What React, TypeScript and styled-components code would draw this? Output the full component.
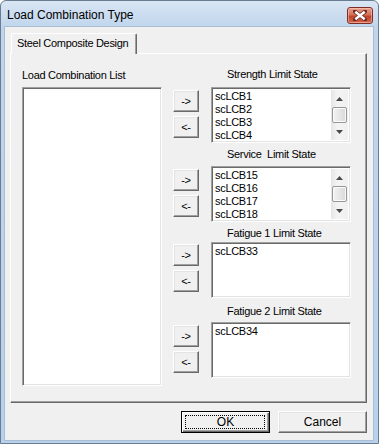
import React from 'react';
import styled, { createGlobalStyle } from 'styled-components';

const Global = createGlobalStyle`
  html, body { margin: 0; padding: 0; background: #ffffff; }
  body { width: 379px; height: 444px; overflow: hidden; }
  * { box-sizing: border-box; }
`;

const UI = `"Liberation Sans", Arial, sans-serif`;

const Window = styled.div`
  width: 379px;
  height: 444px;
  display: flex;
  flex-direction: column;
  background: linear-gradient(#d9e6f4 0px, #c0d5ec 26px, #b9d1ea 100%);
  border: 1px solid #6a7c93;
  border-radius: 6px 6px 0 0;
  padding: 0 4px 2px 3px;
  font-family: ${UI};
  font-size: 11px;
  letter-spacing: -0.3px;
  color: #000;
`;

const TitleBar = styled.div`
  height: 25px;
  flex: none;
  display: flex;
  align-items: center;
  justify-content: space-between;
  padding-left: 3px;
`;

const Title = styled.span`
  font-family: ${UI};
  font-size: 12px;
  letter-spacing: 0;
  color: #000;
  margin-top: 2px;
`;

const CloseBtn = styled.div`
  width: 26px;
  height: 17px;
  margin-right: 1px;
  margin-top: 4px;
  border: 1px solid #7e2f25;
  border-radius: 3px;
  background: linear-gradient(#e9a08c 0%, #d56f57 45%, #c0432a 55%, #d0664a 100%);
  box-shadow: inset 0 0 0 1px rgba(255, 215, 205, 0.5);
  display: flex;
  align-items: center;
  justify-content: center;
`;

const Client = styled.div`
  flex: 1;
  background: #f0f0f0;
  border: 1px solid #a9bdd3;
  display: flex;
  flex-direction: column;
  padding: 6px 6px 0 5px;
`;

const TabStrip = styled.div`
  display: flex;
  padding-left: 1px;
  height: 21px;
  position: relative;
  z-index: 1;
`;

const Tab = styled.div`
  height: 21px;
  width: 126px;
  background: #f0f0f0;
  border-top: 1px solid #ffffff;
  border-left: 1px solid #ffffff;
  border-right: 1px solid #696969;
  box-shadow: inset -1px 0 0 #a0a0a0;
  border-radius: 2px 2px 0 0;
  padding: 3px 0 0 5px;
  white-space: nowrap;
`;

const Panel = styled.div`
  height: 350px;
  margin-top: -1px;
  border-top: 1px solid #ffffff;
  border-left: 1px solid #ffffff;
  border-right: 1px solid #696969;
  border-bottom: 1px solid #696969;
  box-shadow: inset -1px -1px 0 #a0a0a0;
  display: flex;
  padding-left: 11px;
`;

const LeftColumn = styled.div`
  width: 140px;
  display: flex;
  flex-direction: column;
  gap: 5px;
  padding-top: 15px;
`;

const Label = styled.div`
  height: 13px;
  line-height: 13px;
  white-space: pre;
`;

const ListBox = styled.div<{ $h: number }>`
  height: ${(p) => p.$h}px;
  width: 140px;
  background: #ffffff;
  border-top: 1px solid #a0a0a0;
  border-left: 1px solid #a0a0a0;
  border-right: 1px solid #ffffff;
  border-bottom: 1px solid #ffffff;
  box-shadow: inset 1px 1px 0 #696969, inset -1px -1px 0 #e3e3e3;
  padding: 2px;
  display: flex;
`;

const Items = styled.div`
  flex: 1;
  padding: 0 0 0 1px;
  overflow: hidden;
`;

const Item = styled.div`
  height: 13px;
  line-height: 13px;
  white-space: nowrap;
`;

const ScrollBar = styled.div`
  width: 17px;
  display: flex;
  flex-direction: column;
  background: linear-gradient(90deg, #e6e6e6, #f4f4f4 40%, #f0f0f0);
`;

const ArrowCell = styled.div`
  height: 17px;
  display: flex;
  align-items: center;
  justify-content: center;
`;

const Track = styled.div`
  flex: 1;
  display: flex;
  padding: 0 1px;
`;

const Thumb = styled.div`
  flex: 1;
  border: 1px solid #979797;
  border-radius: 2px;
  background: linear-gradient(90deg, #f3f3f3, #e6e6e6 50%, #d9d9d9);
  box-shadow: inset 0 0 0 1px #fbfbfb;
`;

const RightArea = styled.div`
  display: flex;
  flex-direction: column;
  margin-left: 11px;
`;

const Group = styled.div<{ $mt: number }>`
  display: grid;
  grid-template-columns: 26px 140px;
  column-gap: 12px;
  margin-top: ${(p) => p.$mt}px;
`;

const GroupLabel = styled(Label)<{ $gap: number }>`
  grid-column: 2;
  margin-bottom: ${(p) => p.$gap}px;
  padding-left: 16px;
`;

const ButtonStack = styled.div<{ $top: number }>`
  grid-column: 1;
  display: flex;
  flex-direction: column;
  gap: 4px;
  padding-top: ${(p) => p.$top}px;
`;

const MoveButton = styled.div`
  width: 26px;
  height: 22px;
  background: #f0f0f0;
  border-top: 1px solid #ffffff;
  border-left: 1px solid #ffffff;
  border-right: 1px solid #696969;
  border-bottom: 1px solid #696969;
  box-shadow: inset -1px -1px 0 #a0a0a0, inset 1px 1px 0 #e3e3e3;
  display: flex;
  align-items: center;
  justify-content: center;
  padding-bottom: 1px;
  white-space: pre;
`;

const Footer = styled.div`
  display: flex;
  justify-content: flex-end;
  gap: 8px;
  padding-top: 8px;
`;

const DialogButton = styled.div<{ $default?: boolean }>`
  width: 89px;
  height: 22px;
  position: relative;
  background: #f0f0f0;
  border: 1px solid;
  border-color: ${(p) => (p.$default ? '#000000' : '#ffffff #696969 #696969 #ffffff')};
  box-shadow: ${(p) =>
    p.$default
      ? 'inset 1px 1px 0 #ffffff, inset -1px -1px 0 #696969, inset -2px -2px 0 #a0a0a0'
      : 'inset -1px -1px 0 #a0a0a0, inset 1px 1px 0 #e3e3e3'};
  display: flex;
  align-items: center;
  justify-content: center;
  font-size: 12px;
  letter-spacing: 0;
`;

const FocusRect = styled.div`
  position: absolute;
  inset: 3px 4px 3px 3px;
  border: 1px dotted #000;
  pointer-events: none;
`;

const UpArrow = () => (
  <svg width="7" height="4" viewBox="0 0 7 4">
    <path d="M3.5 0 L7 4 L0 4 Z" fill="#4a4a4a" />
  </svg>
);
const DownArrow = () => (
  <svg width="7" height="4" viewBox="0 0 7 4">
    <path d="M0 0 L7 0 L3.5 4 Z" fill="#4a4a4a" />
  </svg>
);

const CloseGlyph = () => (
  <svg width="14" height="11" viewBox="0 0 14 11">
    <path d="M2 1.5 L12 9.5 M12 1.5 L2 9.5" stroke="#6b2a22" strokeWidth="4" strokeLinecap="round" />
    <path d="M2.3 1.8 L11.7 9.2 M11.7 1.8 L2.3 9.2" stroke="#ffffff" strokeWidth="2.4" strokeLinecap="butt" />
  </svg>
);

type GroupData = {
  label: string;
  mt: number;
  gap: number;
  btnTop: number;
  items: string[];
  scroll: boolean;
};

const groups: GroupData[] = [
  { label: 'Strength Limit State', mt: 14, gap: 6, btnTop: 3, items: ['scLCB1', 'scLCB2', 'scLCB3', 'scLCB4'], scroll: true },
  { label: 'Service  Limit State', mt: 5, gap: 5, btnTop: 3, items: ['scLCB15', 'scLCB16', 'scLCB17', 'scLCB18'], scroll: true },
  { label: 'Fatigue 1 Limit State', mt: 5, gap: 2, btnTop: 2, items: ['scLCB33'], scroll: false },
  { label: 'Fatigue 2 Limit State', mt: 7, gap: 4, btnTop: 3, items: ['scLCB34'], scroll: false },
];

export default function App() {
  return (
    <>
      <Global />
      <Window>
        <TitleBar>
          <Title>Load Combination Type</Title>
          <CloseBtn>
            <CloseGlyph />
          </CloseBtn>
        </TitleBar>
        <Client>
          <TabStrip>
            <Tab>Steel Composite Design</Tab>
          </TabStrip>
          <Panel>
            <LeftColumn>
              <Label>Load Combination List</Label>
              <ListBox $h={299} />
            </LeftColumn>
            <RightArea>
              {groups.map((g) => (
                <Group key={g.label} $mt={g.mt}>
                  <GroupLabel $gap={g.gap}>{g.label}</GroupLabel>
                  <ButtonStack $top={g.btnTop}>
                    <MoveButton>{'->'}</MoveButton>
                    <MoveButton>{'<-'}</MoveButton>
                  </ButtonStack>
                  <ListBox $h={56}>
                    <Items>
                      {g.items.map((it) => (
                        <Item key={it}>{it}</Item>
                      ))}
                    </Items>
                    {g.scroll && (
                      <ScrollBar>
                        <ArrowCell>
                          <UpArrow />
                        </ArrowCell>
                        <Track>
                          <Thumb />
                        </Track>
                        <ArrowCell>
                          <DownArrow />
                        </ArrowCell>
                      </ScrollBar>
                    )}
                  </ListBox>
                </Group>
              ))}
            </RightArea>
          </Panel>
          <Footer>
            <DialogButton $default>
              OK
              <FocusRect />
            </DialogButton>
            <DialogButton>Cancel</DialogButton>
          </Footer>
        </Client>
      </Window>
    </>
  );
}
